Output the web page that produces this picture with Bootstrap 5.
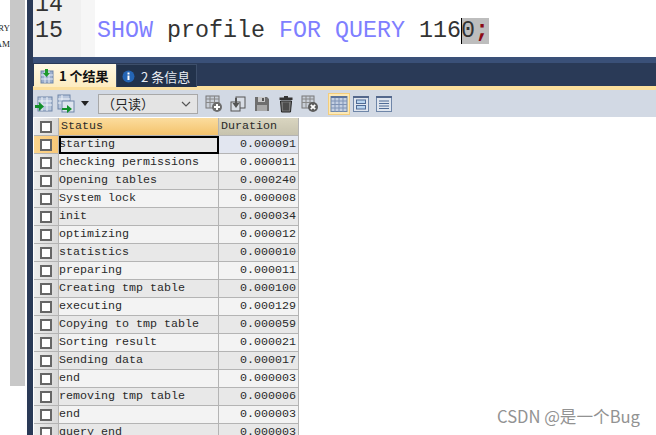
<!DOCTYPE html>
<html lang="zh"><head><meta charset="utf-8"><title>SHOW profile</title>
<link href="https://cdn.jsdelivr.net/npm/bootstrap@5.3.0/dist/css/bootstrap.min.css" rel="stylesheet">
<style>
html,body{height:435px;overflow:hidden;background:#fff}
body{font-family:"Liberation Mono",monospace;position:relative}
.leftcol{width:27px;height:435px;flex:none}
.tinytext{width:10px;font:9px/16px "Liberation Serif",serif;color:#222;padding-top:20px;overflow:hidden;direction:rtl;white-space:nowrap}
.scrolltrack{width:15px;height:386px;background:#c8c8c8}
.mainpane{flex:1;border-left:6px solid #2a3a57;height:435px;min-width:0}
.mainpane>div{flex:none}
.editor{height:57px;overflow:hidden;font:23.33px/26px "Liberation Mono",monospace}
.gutter{width:48px;background:#f0f0f0;color:#333;padding-left:2px;margin-top:-8px;height:70px;flex:none}
.gutter div{height:26px}
.dots{width:14px;flex:none;background-image:radial-gradient(#d4d4d4 .6px,transparent .7px);background-size:2px 2px;background-color:#f6f6f6}
.code{padding-left:2px;padding-top:18px;white-space:pre;color:#333}
.kw{color:#7f7fff}.sel{background:#bdbdbd;box-shadow:inset 1px 0 0 #000}.semi{color:#8b0a14;font-weight:700}
.tabband{background:#2a3a57;border-top:6px solid #3a5078;height:33px;border-bottom:4px solid #fbdf9c}
.restab{height:23px;font:700 13px/24px "Noto Sans CJK SC","Liberation Sans",sans-serif;padding:0 0 0 6px;background:linear-gradient(#fff8e4,#fdecc0);color:#111;margin:1px 0 0 1px;width:82px;white-space:nowrap;gap:5px}
.msgtab{height:23px;font:13px/23px "Noto Sans CJK SC","Liberation Sans",sans-serif;color:#e8edf4;background:#22324b;border:1px solid #3d4e6a;border-bottom:0;margin-top:1px;width:81px;padding-left:5px;white-space:nowrap;gap:6px}
.toolstrip{height:27px;background:#d2d9e4;padding-left:2px}
.ropick{width:100px;height:20px;background:#e4e4e4;border:1px solid #a8a8a8;font:13px/18px "Noto Sans CJK SC",sans-serif;color:#222;margin:0 7px 0 9px;padding:0 6px 0 3px}
.gapb{margin-left:6px}
.gapview{margin-left:10px}
.gapc{margin-left:3px}
.gapd{margin-left:5px}
.viewsel{background:#fbe9b8;outline:1px solid #f4cd7c}
.gridholder{padding:1px 0 0 1px}
.gridwrap{border-collapse:separate;border-spacing:0;table-layout:fixed;width:265px;font:11.67px/15px "Liberation Mono",monospace;color:#2a2a2a}
.cola{width:25px}.colb{width:160px}.colc{width:80px}
.gridwrap th,.gridwrap td{height:18px;padding:0;border-right:1px solid #b4b4b4;border-bottom:1px solid #b4b4b4;font-weight:400;white-space:nowrap;overflow:hidden}
.gridwrap .ck{background:linear-gradient(90deg,#ededed,#d8d8d8);text-align:center;padding:0;vertical-align:middle}
.cbx{display:block;width:12px;height:12px;border:2px solid #666;background:#fff;margin:0 auto}
.gridwrap th.st{background:linear-gradient(#fbdc9e,#f4c36c);padding-left:2px}
.gridwrap th.du{background:linear-gradient(#d9d5c0,#c7c3ae);padding-left:2px}
.gridwrap tr:nth-child(odd) td.v{background:#e8e8e8}
.gridwrap tr:nth-child(even) td.v{background:#f3f3f3}
.gridwrap td.n{text-align:right;padding-right:2px}
.gridwrap tr.cur td.ck{background:linear-gradient(90deg,#fbd48c,#f8c878)}
.gridwrap tr.cur td.s{outline:2px solid #000;outline-offset:-2px}
.gridwrap tr.cur td.n{background:#e2e6f0}
.stamp{position:absolute;left:497px;top:406px;font:16.6px/20px "Noto Sans CJK SC","Liberation Sans",sans-serif;color:#929292;white-space:nowrap}
</style></head>
<body>
<div class="d-flex">
 <div class="leftcol d-flex">
  <div class="tinytext"><div>RY</div><div>AM</div></div>
  <div class="scrolltrack"></div>
 </div>
 <div class="mainpane d-flex flex-column">
  <div class="editor d-flex">
   <div class="gutter"><div>14</div><div>15</div></div>
   <div class="dots"></div>
   <div class="code"><span class="kw">SHOW</span> profile <span class="kw">FOR</span> <span class="kw">QUERY</span> 116<span class="sel">0<span class="semi">;</span></span></div>
  </div>
  <div class="tabband d-flex align-items-start">
   <div class="restab d-flex align-items-center">
    <svg width="14" height="16" viewBox="0 0 14 16"><rect x="1" y="3" width="12" height="12" fill="#9db0cf" stroke="#6f86a8"/><path d="M1 7h12M1 11h12M5 3v12M9 3v12" stroke="#e4eaf3"/><path d="M5 1h3v4h2L6.500 9 3 5h2z" fill="#1d9a2a"/></svg>
    <span>1 个结果</span>
   </div>
   <div class="msgtab d-flex align-items-center">
    <svg width="13" height="13" viewBox="0 0 13 13"><circle cx="6.500" cy="6.500" r="6" fill="#2465b5"/><path d="M5.500 5.500h2v4.500h-2zM5.500 2.500h2v2h-2z" fill="#fff"/></svg>
    <span>2 条信息</span>
   </div>
  </div>
  <div class="toolstrip d-flex align-items-center">
   <svg width="18" height="18" viewBox="0 0 18 18"><rect x="3" y="2" width="14" height="14" fill="#b8c6dc" stroke="#6f86a8"/><path d="M3 6h14M3 10h14M7 2v14M12 2v14" stroke="#eef2f7"/><path d="M0 10h4V7l5 4.500L4 16v-3H0z" fill="#12902a"/></svg>
   <svg class="ms-1" width="20" height="20" viewBox="0 0 20 20"><rect x="1" y="1" width="12" height="14" fill="#b8c6dc" stroke="#6f86a8"/><path d="M1 5h12M1 9h12M5 1v14" stroke="#eef2f7"/><rect x="5" y="7" width="12" height="11" fill="#dfe5ee" stroke="#6f86a8"/><path d="M5 14h5v-3l5 4-5 4v-3H5z" fill="#12902a"/></svg>
   <svg class="ms-1" width="8" height="5" viewBox="0 0 8 5"><path d="M0 0h8L4 5z" fill="#222"/></svg>
   <div class="ropick d-flex align-items-center justify-content-between">
    <span>（只读）</span>
    <svg width="10" height="6" viewBox="0 0 10 6"><path d="M1 1l4 4 4-4" fill="none" stroke="#555" stroke-width="1.200"/></svg>
   </div>
   <svg width="18" height="18" viewBox="0 0 18 18"><rect x="1" y="1" width="13" height="12" fill="#c9cfd8" stroke="#777"/><path d="M1 4h13M1 7.500h13M5 1v12M9.500 1v12" stroke="#888"/><circle cx="12" cy="12" r="5" fill="#6c6c6c"/><path d="M12 9v6M9 12h6" stroke="#fff" stroke-width="2"/></svg>
   <svg class="gapb" width="18" height="18" viewBox="0 0 18 18"><rect x="7" y="2" width="9" height="11" fill="#d8dde5" stroke="#555"/><rect x="2" y="7" width="9" height="9" fill="#d8dde5" stroke="#555"/><path d="M6 3v5H3.500L7 13l3.500-5H8V3z" fill="#555"/></svg>
   <svg class="gapb" width="18" height="18" viewBox="0 0 18 18"><path d="M2 2h12l2 2v12H2z" fill="#6e6e6e"/><rect x="5" y="2" width="7" height="5" fill="#c8c8c8"/><rect x="9" y="3" width="2" height="3" fill="#555"/><rect x="4" y="10" width="10" height="6" fill="#a8a8a8"/></svg>
   <svg class="gapb" width="18" height="18" viewBox="0 0 18 18"><path d="M7 1h4v1.500h4.500V5h-13V2.500H7z" fill="#333"/><path d="M3.500 6h11l-1 11h-9z" fill="#777" stroke="#222"/><path d="M7 7.500V15.500M9 7.500V15.500M11 7.500V15.500" stroke="#222"/></svg>
   <svg class="gapb" width="18" height="18" viewBox="0 0 18 18"><rect x="1" y="1" width="12" height="12" fill="#c9cfd8" stroke="#777"/><path d="M1 4h12M1 7.500h12M5 1v12M9 1v12" stroke="#888"/><circle cx="12" cy="12" r="5" fill="#5c5c5c"/><path d="M9.800 9.800l4.400 4.400M14.200 9.800l-4.400 4.400" stroke="#fff" stroke-width="1.800"/></svg>
   <div class="viewsel d-flex gapview"><svg width="20" height="20" viewBox="0 0 20 20"><rect x="2" y="2.500" width="16" height="15" fill="#c3cfe2" stroke="#6f86a8"/><rect x="2" y="2" width="16" height="2" fill="#5a729b"/><path d="M2 7h16M2 10.500h16M2 14h16M6 4v14M10 4v14M14 4v14" stroke="#7e93b5"/></svg></div>
   <svg class="gapc" width="18" height="18" viewBox="0 0 18 18"><rect x="1.500" y="1.500" width="15" height="15" fill="#dfe5ee" stroke="#6f86a8"/><rect x="1" y="1" width="16" height="2" fill="#54688c"/><rect x="4.500" y="5" width="9" height="3.500" fill="#b8d4ef" stroke="#4f6b96"/><rect x="4.500" y="10.500" width="9" height="3.500" fill="#b8d4ef" stroke="#4f6b96"/></svg>
   <svg class="gapd" width="18" height="18" viewBox="0 0 18 18"><rect x="1.500" y="1.500" width="15" height="15" fill="#dfe5ee" stroke="#6f86a8"/><rect x="1" y="1" width="16" height="2" fill="#54688c"/><path d="M4 6h10M4 8.500h10M4 11h10M4 13.500h10" stroke="#4f6b96"/></svg>
  </div>
  <div class="gridholder">
  <table class="gridwrap">
   <colgroup><col class="cola"><col class="colb"><col class="colc"></colgroup>
   <thead><tr><th class="ck"><span class="cbx"></span></th><th class="st">Status</th><th class="du">Duration</th></tr></thead>
   <tbody>
    <tr class="cur"><td class="ck"><span class="cbx"></span></td><td class="v s">starting</td><td class="v n">0.000091</td></tr>
    <tr><td class="ck"><span class="cbx"></span></td><td class="v">checking permissions</td><td class="v n">0.000011</td></tr>
    <tr><td class="ck"><span class="cbx"></span></td><td class="v">Opening tables</td><td class="v n">0.000240</td></tr>
    <tr><td class="ck"><span class="cbx"></span></td><td class="v">System lock</td><td class="v n">0.000008</td></tr>
    <tr><td class="ck"><span class="cbx"></span></td><td class="v">init</td><td class="v n">0.000034</td></tr>
    <tr><td class="ck"><span class="cbx"></span></td><td class="v">optimizing</td><td class="v n">0.000012</td></tr>
    <tr><td class="ck"><span class="cbx"></span></td><td class="v">statistics</td><td class="v n">0.000010</td></tr>
    <tr><td class="ck"><span class="cbx"></span></td><td class="v">preparing</td><td class="v n">0.000011</td></tr>
    <tr><td class="ck"><span class="cbx"></span></td><td class="v">Creating tmp table</td><td class="v n">0.000100</td></tr>
    <tr><td class="ck"><span class="cbx"></span></td><td class="v">executing</td><td class="v n">0.000129</td></tr>
    <tr><td class="ck"><span class="cbx"></span></td><td class="v">Copying to tmp table</td><td class="v n">0.000059</td></tr>
    <tr><td class="ck"><span class="cbx"></span></td><td class="v">Sorting result</td><td class="v n">0.000021</td></tr>
    <tr><td class="ck"><span class="cbx"></span></td><td class="v">Sending data</td><td class="v n">0.000017</td></tr>
    <tr><td class="ck"><span class="cbx"></span></td><td class="v">end</td><td class="v n">0.000003</td></tr>
    <tr><td class="ck"><span class="cbx"></span></td><td class="v">removing tmp table</td><td class="v n">0.000006</td></tr>
    <tr><td class="ck"><span class="cbx"></span></td><td class="v">end</td><td class="v n">0.000003</td></tr>
    <tr><td class="ck"><span class="cbx"></span></td><td class="v">query end</td><td class="v n">0.000003</td></tr>
   </tbody>
  </table>
  </div>
 </div>
</div>
<div class="stamp">CSDN @是一个Bug</div>
<script src="https://cdn.jsdelivr.net/npm/bootstrap@5.3.0/dist/js/bootstrap.bundle.min.js"></script>
</body></html>
